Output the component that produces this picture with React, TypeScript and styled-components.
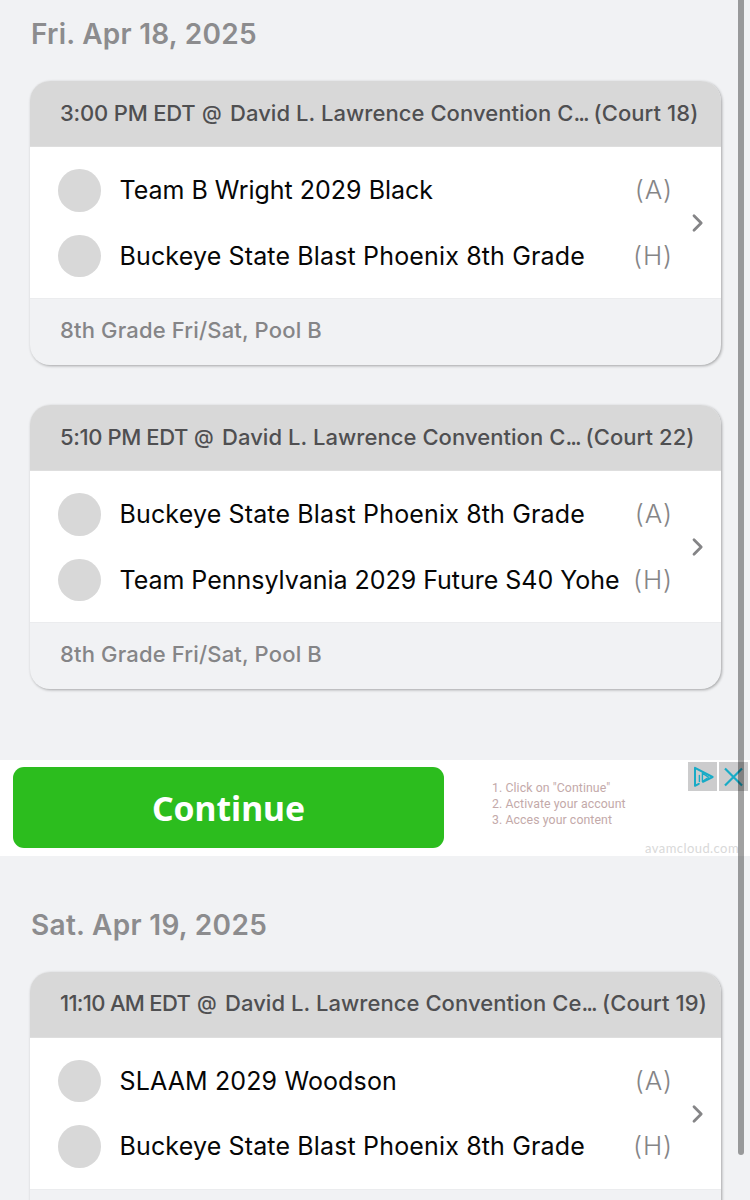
import React from 'react';
import styled, { createGlobalStyle } from 'styled-components';

const GlobalStyle = createGlobalStyle`
  * { box-sizing: border-box; }
  html, body { margin: 0; padding: 0; height: 1200px; overflow: hidden; background: #f1f2f4; }
  body { font-family: Inter, "Liberation Sans", sans-serif; }
`;

const Page = styled.main`
  position: relative;
  width: 750px;
  height: 1200px;
  overflow: hidden;
  background: #f1f2f4;
`;

const Day = styled.section`
  display: flex;
  flex-direction: column;
  padding: 0 29px 0 30px;
`;

const DayTitle = styled.h2<{ $top: number; $height: number; $spacing: number }>`
  margin: 0;
  padding: ${(p) => p.$top}px 0 0 1px;
  height: ${(p) => p.$height}px;
  font-size: 28px;
  font-weight: 600;
  line-height: 36px;
  letter-spacing: ${(p) => p.$spacing}px;
  color: #8c8c8e;
  white-space: nowrap;
`;

const Card = styled.article`
  width: 691px;
  height: 284px;
  margin-bottom: 40px;
  border-radius: 20px;
  overflow: hidden;
  background: #f1f2f4;
  box-shadow: 1px 1px 3px rgba(0, 0, 0, 0.32);
`;

const CardHeader = styled.header`
  display: flex;
  align-items: center;
  height: 66px;
  padding: 0 0 2px 30px;
  background: #d8d8d8;
  border-bottom: 1px solid #dedede;
  font-size: 22px;
  font-weight: 480;
  line-height: 28px;
  color: #4f4f51;
  white-space: nowrap;
`;

const Time = styled.span<{ $width: number; $spacing: number }>`
  width: ${(p) => p.$width}px;
  letter-spacing: ${(p) => p.$spacing}px;
`;

const At = styled.span`
  width: 28px;
  font-size: 20px;
`;

const Venue = styled.span<{ $width: number }>`
  width: ${(p) => p.$width}px;
  letter-spacing: 0.06px;
`;

const Dots = styled.span`
  letter-spacing: -1.9px;
`;

const Court = styled.span`
  letter-spacing: 0.08px;
`;

const Matchup = styled.div`
  display: flex;
  align-items: center;
  height: 151px;
  padding: 1px 17px 0 28px;
  background: #fff;
`;

const Teams = styled.div`
  display: flex;
  flex-direction: column;
  gap: 23px;
  width: 615px;
`;

const TeamRow = styled.div`
  display: flex;
  align-items: center;
  height: 42.5px;
`;

const Avatar = styled.span`
  width: 42.5px;
  height: 42.5px;
  margin-right: 19px;
  border-radius: 50%;
  background: #d8d8d8;
`;

const TeamName = styled.span<{ $spacing: number }>`
  flex: 1;
  font-size: 25px;
  line-height: 32px;
  letter-spacing: ${(p) => p.$spacing}px;
  color: #060606;
  white-space: nowrap;
`;

const Side = styled.span`
  font-size: 26px;
  font-weight: 320;
  line-height: 32px;
  letter-spacing: 0.9px;
  color: #858587;
`;

const Chevron = styled.svg`
  width: 14px;
  height: 20px;
  margin-left: 17px;
  fill: none;
  stroke: #858587;
  stroke-width: 2.8;
  stroke-linecap: round;
  stroke-linejoin: round;
`;

const CardFooter = styled.footer`
  height: 67px;
  padding: 17px 30px 0;
  font-size: 22px;
  font-weight: 480;
  line-height: 28px;
  letter-spacing: 0.16px;
  color: #858587;
  border-top: 1px solid #ebecee;
`;

const Ad = styled.aside`
  display: flex;
  position: relative;
  height: 96px;
  margin-top: 31px;
  padding: 7px 0 0 13px;
  background: #fff;
`;

const Continue = styled.button`
  width: 431px;
  height: 81px;
  padding: 0;
  border: 0;
  border-radius: 11px;
  background: #2cbd1e;
  color: #fff;
  font: 700 33.7px/46px "Noto Sans", sans-serif;
`;

const Steps = styled.ol`
  margin: 13px 0 0 48px;
  padding: 0;
  list-style: none;
  font: 400 12.3px/16px Roboto, sans-serif;
  letter-spacing: 0.08px;
  color: #c3a9a9;
`;

const AdControls = styled.div`
  position: absolute;
  top: 2px;
  right: 2px;
  display: flex;
  gap: 2px;
`;

const AdControl = styled.span`
  width: 29px;
  height: 29px;
  background: #cccccd;
  svg { display: block; width: 29px; height: 29px; fill: none; stroke: #18abc6; }
`;

const AdDomain = styled.span`
  position: absolute;
  right: 11px;
  bottom: 0;
  font: 400 13px/16px Lato, sans-serif;
  letter-spacing: 0.42px;
  color: #d9d9d9;
`;

const ScrollThumb = styled.div`
  position: absolute;
  top: -10px;
  right: 6px;
  width: 6px;
  height: 1165px;
  border-radius: 3px;
  background: rgba(0, 0, 0, 0.37);
`;

type Team = { name: string; spacing: number; side: string };
type Game = {
  time: string; timeWidth: number; timeSpacing: number;
  venue: string; venueWidth: number;
  court: string;
  pool?: string;
  teams: Team[];
};

const buckeye = { name: 'Buckeye State Blast Phoenix 8th Grade', spacing: 0.15 };
const poolB = '8th Grade Fri/Sat, Pool B';

const friday: Game[] = [
  {
    time: '3:00 PM EDT', timeWidth: 142, timeSpacing: -0.2,
    venue: 'David L. Lawrence Convention C', venueWidth: 363.5,
    court: '(Court 18)', pool: poolB,
    teams: [{ name: 'Team B Wright 2029 Black', spacing: 0, side: '(A)' }, { ...buckeye, side: '(H)' }],
  },
  {
    time: '5:10 PM EDT', timeWidth: 134, timeSpacing: -0.4,
    venue: 'David L. Lawrence Convention C', venueWidth: 363.5,
    court: '(Court 22)', pool: poolB,
    teams: [{ ...buckeye, side: '(A)' }, { name: 'Team Pennsylvania 2029 Future S40 Yohe', spacing: -0.02, side: '(H)' }],
  },
];

const saturday: Game[] = [
  {
    time: '11:10 AM EDT', timeWidth: 137, timeSpacing: -0.7,
    venue: 'David L. Lawrence Convention Ce', venueWidth: 377,
    court: '(Court 19)',
    teams: [{ name: 'SLAAM 2029 Woodson', spacing: 0.13, side: '(A)' }, { ...buckeye, side: '(H)' }],
  },
];

const GameCard = ({ game }: { game: Game }) => (
  <Card>
    <CardHeader>
      <Time $width={game.timeWidth} $spacing={game.timeSpacing}>{game.time}</Time>
      <At>@</At>
      <Venue $width={game.venueWidth}>{game.venue}<Dots>...</Dots></Venue>
      <Court>{game.court}</Court>
    </CardHeader>
    <Matchup>
      <Teams>
        {game.teams.map((team) => (
          <TeamRow key={team.name}>
            <Avatar />
            <TeamName $spacing={team.spacing}>{team.name}</TeamName>
            <Side>{team.side}</Side>
          </TeamRow>
        ))}
      </Teams>
      <Chevron viewBox="0 0 14 20"><path d="M4 2.8 11.2 10 4 17.2" /></Chevron>
    </Matchup>
    <CardFooter>{game.pool}</CardFooter>
  </Card>
);

export default function App() {
  return (
    <Page>
      <GlobalStyle />
      <Day>
        <DayTitle $top={16} $height={81} $spacing={0.25}>Fri. Apr 18, 2025</DayTitle>
        {friday.map((game) => <GameCard key={game.time} game={game} />)}
      </Day>
      <Ad>
        <Continue>Continue</Continue>
        <Steps>
          <li>1. Click on "Continue"</li>
          <li>2. Activate your account</li>
          <li>3. Acces your content</li>
        </Steps>
        <AdDomain>avamcloud.com</AdDomain>
        <AdControls>
          <AdControl>
            <svg viewBox="0 0 29 29" strokeWidth="2" strokeLinejoin="round" strokeLinecap="round">
              <path d="M10.8 21.8 7 23.8V5.8L24.6 15 15 19.8" />
              <path d="M11.4 13.5v6" strokeWidth="1.4" />
              <path d="M14.4 11.2v8.3l6-4.3z" strokeWidth="1.4" />
            </svg>
          </AdControl>
          <AdControl>
            <svg viewBox="0 0 29 29" strokeWidth="2.2"><path d="M6 6.5 23 23.5M23 6.5 6 23.5" /></svg>
          </AdControl>
        </AdControls>
      </Ad>
      <Day>
        <DayTitle $top={51} $height={115.5} $spacing={0.3}>Sat. Apr 19, 2025</DayTitle>
        {saturday.map((game) => <GameCard key={game.time} game={game} />)}
      </Day>
      <ScrollThumb />
    </Page>
  );
}
